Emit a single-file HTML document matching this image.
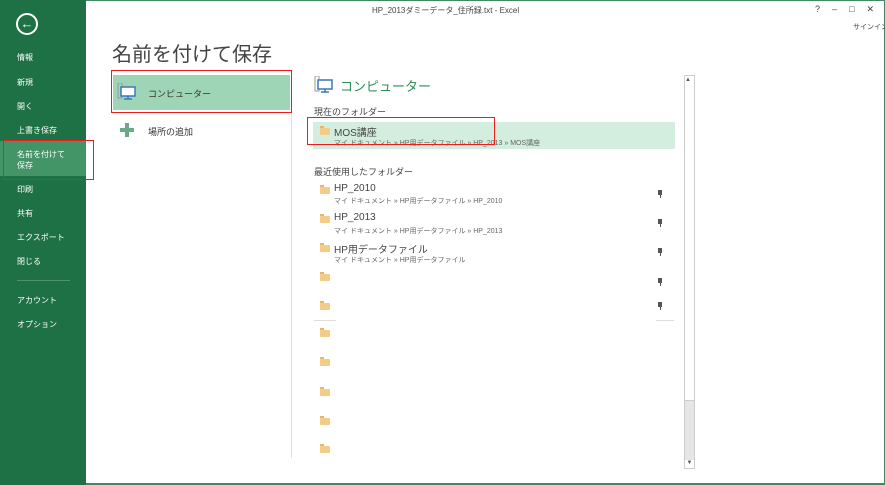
<!DOCTYPE html>
<html><head><meta charset="utf-8"><style>
*{margin:0;padding:0;box-sizing:border-box}
body{width:885px;height:485px;position:relative;overflow:hidden;background:#fff;font-family:"Liberation Sans","Noto Sans CJK JP",sans-serif;color:#444}
.a{position:absolute;white-space:nowrap}
#side{position:absolute;left:0;top:0;width:86px;height:485px;background:#1e7145}
.s{position:absolute;left:17px;font-size:8px;color:#fff}
.r{position:absolute;border:1.5px solid #ee1c1c}
.fold{position:absolute;left:320px;width:10px;height:7px;background:#f3cd88;border-radius:1px}
.fold:before{content:"";position:absolute;left:0;top:-2px;width:4px;height:2px;background:#e8b765}
.t{font-size:10px;color:#444}
.p{font-size:7px;color:#666}
.pin{position:absolute;left:657px;width:6px;height:8px}
.pin:before{content:"";position:absolute;left:1px;top:0;width:4px;height:5px;background:#555}
.pin:after{content:"";position:absolute;left:2.5px;top:5px;width:1px;height:3px;background:#555}
</style></head><body>
<div class="a" style="left:0;top:0;width:885px;height:1px;background:#3f8a5f"></div>
<div class="a" style="left:0;top:483px;width:885px;height:2px;background:#3f8a5f"></div>
<div class="a" style="left:884px;top:0;width:1px;height:485px;background:#3f8a5f"></div>
<div id="side">
 <div class="a" style="left:16px;top:13px;width:22px;height:22px;border:2px solid #fff;border-radius:50%;color:#fff;font-size:13px;line-height:17px;text-align:center;font-weight:bold">←</div>
 <div class="s" style="top:52px">情報</div>
 <div class="s" style="top:77px">新規</div>
 <div class="s" style="top:101px">開く</div>
 <div class="s" style="top:125px">上書き保存</div>
 <div class="a" style="left:0;top:141px;width:86px;height:35px;background:#439467"></div>
 <div class="s" style="top:149px;line-height:11px">名前を付けて<br>保存</div>
 <div class="s" style="top:184px">印刷</div>
 <div class="s" style="top:208px">共有</div>
 <div class="s" style="top:232px">エクスポート</div>
 <div class="s" style="top:256px">閉じる</div>
 <div class="a" style="left:17px;top:280px;width:53px;height:1px;background:#4f9070"></div>
 <div class="s" style="top:295px">アカウント</div>
 <div class="s" style="top:319px">オプション</div>
</div>
<div class="r" style="left:3px;top:140px;width:91px;height:40px"></div>
<div class="a" style="left:372px;top:5px;font-size:8px;color:#444">HP_2013ダミーデータ_住所録.txt - Excel</div>
<div class="a" style="left:815px;top:4px;font-size:9px;color:#444;letter-spacing:12px">?‒□✕</div>
<div class="a" style="left:853px;top:22px;font-size:7px;color:#444">サインイン</div>
<div class="a" style="left:112px;top:38px;font-size:20px;color:#444">名前を付けて保存</div>
<div class="a" style="left:113px;top:75px;width:177px;height:35px;background:#9fd5b7"></div>
<div class="r" style="left:111px;top:70px;width:181px;height:43px"></div>
<svg class="a" style="left:117px;top:83px" width="20" height="18"><rect x="1" y="0" width="4" height="15" fill="none" stroke="#999"/><rect x="4" y="4" width="14" height="9" fill="#fff" stroke="#3a78b8" stroke-width="1.5"/><path d="M11 13v3M7 16h8" stroke="#3a78b8" stroke-width="1.5"/></svg>
<div class="a" style="left:148px;top:87px;font-size:9px;color:#333">コンピューター</div>
<div class="a" style="left:120px;top:128px;width:14px;height:4px;background:#6aa886"></div>
<div class="a" style="left:125px;top:123px;width:4px;height:14px;background:#6aa886"></div>
<div class="a" style="left:148px;top:125px;font-size:9px;color:#333">場所の追加</div>
<div class="a" style="left:291px;top:113px;width:1px;height:345px;background:#e0e0e0"></div>
<svg class="a" style="left:314px;top:76px" width="20" height="18"><rect x="1" y="0" width="4" height="15" fill="none" stroke="#999"/><rect x="4" y="4" width="14" height="9" fill="#fff" stroke="#3a78b8" stroke-width="1.5"/><path d="M11 13v3M7 16h8" stroke="#3a78b8" stroke-width="1.5"/></svg>
<div class="a" style="left:340px;top:76px;font-size:13px;color:#2e8b57">コンピューター</div>
<div class="a" style="left:314px;top:105px;font-size:9px;color:#444">現在のフォルダー</div>
<div class="a" style="left:313px;top:122px;width:362px;height:27px;background:#d3eedf"></div>
<div class="fold" style="top:128px"></div>
<div class="a t" style="left:334px;top:124px">MOS講座</div>
<div class="a p" style="left:334px;top:138px">マイ ドキュメント » HP用データファイル » HP_2013 » MOS講座</div>
<div class="r" style="left:307px;top:117px;width:188px;height:28px"></div>
<div class="a" style="left:314px;top:165px;font-size:9px;color:#444">最近使用したフォルダー</div>
<div class="fold" style="top:187px"></div><div class="a t" style="left:334px;top:183px">HP_2010</div><div class="a p" style="left:334px;top:196px">マイ ドキュメント » HP用データファイル » HP_2010</div><div class="pin" style="top:190px"></div>
<div class="fold" style="top:216px"></div><div class="a t" style="left:334px;top:212px">HP_2013</div><div class="a p" style="left:334px;top:226px">マイ ドキュメント » HP用データファイル » HP_2013</div><div class="pin" style="top:219px"></div>
<div class="fold" style="top:245px"></div><div class="a t" style="left:334px;top:241px">HP用データファイル</div><div class="a p" style="left:334px;top:255px">マイ ドキュメント » HP用データファイル</div><div class="pin" style="top:248px"></div>
<div class="fold" style="top:274px"></div><div class="pin" style="top:278px"></div>
<div class="fold" style="top:303px"></div><div class="pin" style="top:302px"></div>
<div class="a" style="left:314px;top:320px;width:22px;height:1px;background:#ddd"></div>
<div class="a" style="left:656px;top:320px;width:18px;height:1px;background:#ddd"></div>
<div class="fold" style="top:330px"></div>
<div class="fold" style="top:359px"></div>
<div class="fold" style="top:389px"></div>
<div class="fold" style="top:418px"></div>
<div class="fold" style="top:446px"></div>
<div class="a" style="left:684px;top:75px;width:11px;height:394px;background:#e6e6e6;border:1px solid #ccc"></div>
<div class="a" style="left:685px;top:76px;width:9px;height:325px;background:#fff;border-bottom:1px solid #ccc"></div>
<div class="a" style="left:685px;top:77px;font-size:6px;color:#555">▲</div>
<div class="a" style="left:685px;top:460px;width:9px;height:8px;background:#fff;font-size:6px;color:#555;text-align:center">▼</div>
</body></html>
